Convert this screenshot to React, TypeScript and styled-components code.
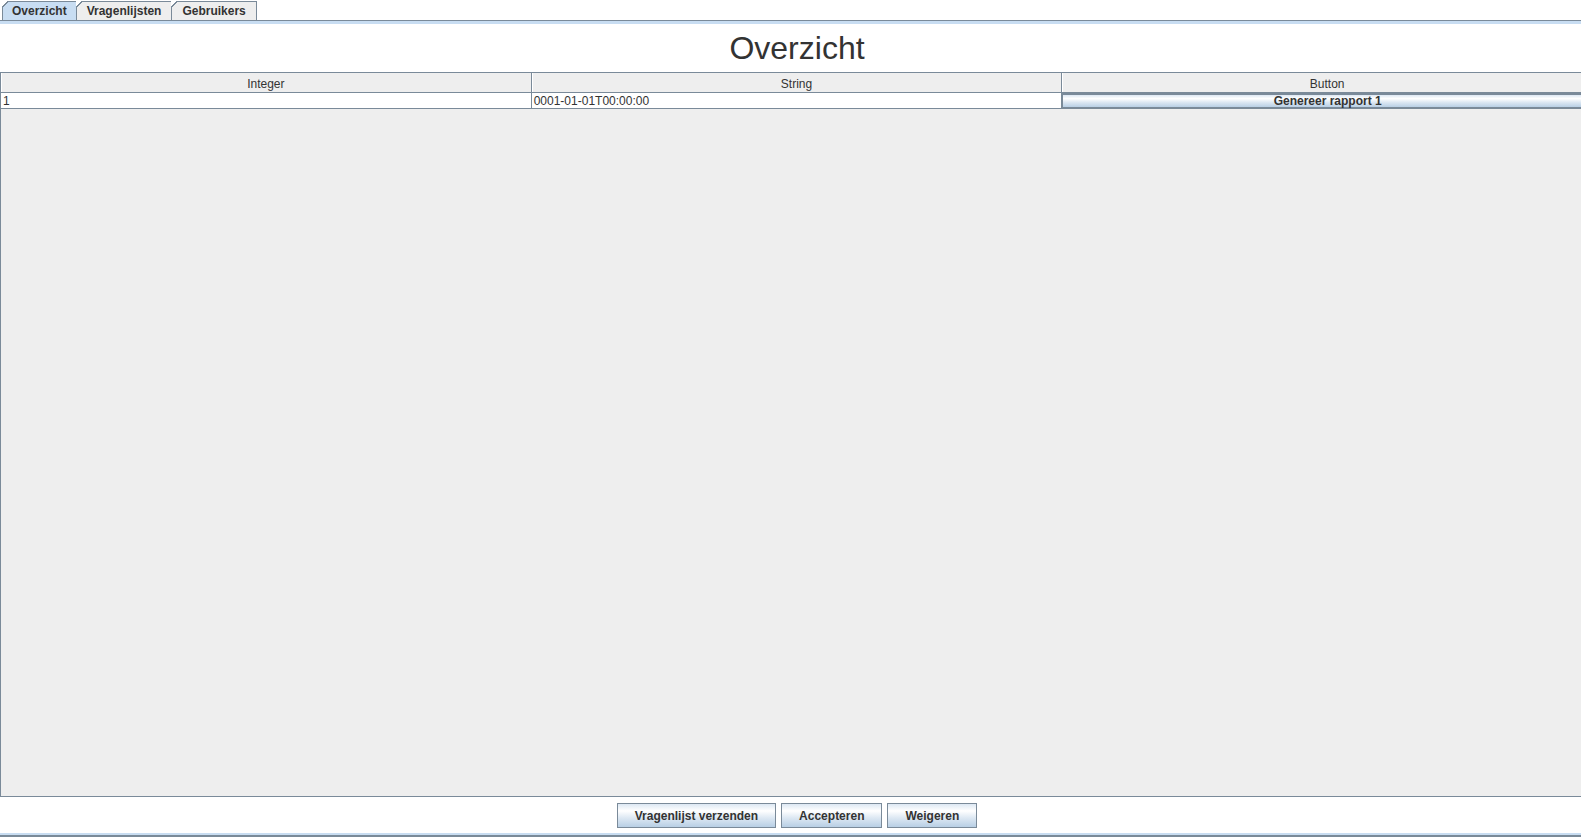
import React from "react";
import styled, { createGlobalStyle } from "styled-components";

const GlobalStyle = createGlobalStyle`
  html, body {
    margin: 0;
    padding: 0;
    background: #ffffff;
    overflow: hidden;
  }
  body {
    font-family: "Liberation Sans", Arial, sans-serif;
    font-size: 12px;
    color: #333333;
  }
`;

const tabs = ["Overzicht", "Vragenlijsten", "Gebruikers"];
const columns = ["Integer", "String", "Button"];
const rows = [{ id: 1, value: "0001-01-01T00:00:00", label: "Genereer rapport 1" }];

const App = () => {
  return (
    <>
      <GlobalStyle />
      <Window>
        <TabBar>
          {tabs.map((t, i) => (
            <Tab key={t} selected={i === 0}>
              {t}
            </Tab>
          ))}
        </TabBar>
        <ContentFrame>
          <Panel>
            <Title>Overzicht</Title>
            <ScrollPane>
              <Row>
                {columns.map((c) => (
                  <HeaderCell key={c}>{c}</HeaderCell>
                ))}
              </Row>
              {rows.map((r) => (
                <Row key={r.id}>
                  <Cell>{r.id}</Cell>
                  <Cell>{r.value}</Cell>
                  <ButtonCell>
                    <CellButton>{r.label}</CellButton>
                  </ButtonCell>
                </Row>
              ))}
            </ScrollPane>
            <ButtonBar>
              <ActionButton>Vragenlijst verzenden</ActionButton>
              <ActionButton>Accepteren</ActionButton>
              <ActionButton>Weigeren</ActionButton>
            </ButtonBar>
          </Panel>
        </ContentFrame>
      </Window>
    </>
  );
};

export default App;

const buttonGradient = `linear-gradient(to bottom, #dde8f3 0%, #ffffff 30%, #dde8f3 60%, #b8cfe5 100%)`;

const Window = styled.div`
  width: 1594px;
  height: 837px;
  display: flex;
  flex-direction: column;
  overflow: hidden;
`;

const TabBar = styled.div`
  height: 20px;
  display: flex;
  align-items: flex-end;
  padding-left: 2px;
  box-sizing: border-box;
`;

const Tab = styled.div<{ selected?: boolean }>`
  position: relative;
  height: 19px;
  box-sizing: border-box;
  padding: 0 10px 0 10px;
  display: flex;
  align-items: center;
  font-weight: bold;
  font-size: 12px;
  color: #333333;
  background: ${(p) => (p.selected ? "#c8ddf2" : "#eeeeee")};
  border: 1px solid #7a8a99;
  border-bottom: none;
  margin-left: -1px;

  &:first-child {
    margin-left: 0;
    padding: 0 9px 0 9px;
  }

  &::before {
    content: "";
    position: absolute;
    top: -1px;
    left: -1px;
    width: 7px;
    height: 7px;
    background: linear-gradient(135deg, #ffffff 0 42%, #7a8a99 42% 56%, transparent 56%);
  }
`;

const ContentFrame = styled.div`
  flex: 1;
  display: flex;
  flex-direction: column;
  border-top: 1px solid #7a8a99;
  border-bottom: 2px solid #7a8a99;
`;

const Panel = styled.div`
  flex: 1;
  display: flex;
  flex-direction: column;
  background: #ffffff;
  border-top: 3px solid #c8ddf2;
  border-bottom: 2px solid #c8ddf2;
`;

const Title = styled.div`
  height: 48px;
  line-height: 48px;
  text-align: center;
  font-size: 32px;
  color: #333333;
`;

const ScrollPane = styled.div`
  height: 725px;
  box-sizing: border-box;
  border: 1px solid #7a8a99;
  background: #eeeeee;
  overflow: hidden;
`;

const Row = styled.div`
  display: flex;
`;

const HeaderCell = styled.div`
  width: 531px;
  height: 20px;
  box-sizing: border-box;
  border-right: 1px solid #7a8a99;
  border-bottom: 1px solid #7a8a99;
  box-shadow: inset 1px 0 0 #ffffff;
  background: #eeeeee;
  display: flex;
  align-items: flex-end;
  justify-content: center;
  padding-bottom: 1px;
  font-size: 12px;
  color: #333333;
`;

const Cell = styled.div`
  width: 531px;
  height: 16px;
  box-sizing: border-box;
  border-right: 1px solid #7a8a99;
  border-bottom: 1px solid #7a8a99;
  background: #ffffff;
  padding-left: 2px;
  line-height: 17px;
  font-size: 12px;
  color: #333333;
`;

const ButtonCell = styled.div`
  width: 531px;
  height: 16px;
  box-sizing: border-box;
  border-bottom: 1px solid #7a8a99;
  display: flex;
`;

const CellButton = styled.div`
  flex: 1;
  box-sizing: border-box;
  border: 1px solid #7a8a99;
  border-top-width: 2px;
  background: ${buttonGradient};
  font-weight: bold;
  font-size: 12px;
  text-align: center;
  line-height: 12px;
  color: #333333;
`;

const ButtonBar = styled.div`
  height: 36px;
  box-sizing: border-box;
  padding-top: 6px;
  display: flex;
  justify-content: center;
  gap: 5px;
`;

const ActionButton = styled.button`
  height: 25px;
  padding: 0 17px;
  box-sizing: border-box;
  border: 1px solid #7a8a99;
  border-radius: 0;
  background: ${buttonGradient};
  font-family: "Liberation Sans", Arial, sans-serif;
  font-weight: bold;
  font-size: 12px;
  color: #333333;
  cursor: pointer;
`;
